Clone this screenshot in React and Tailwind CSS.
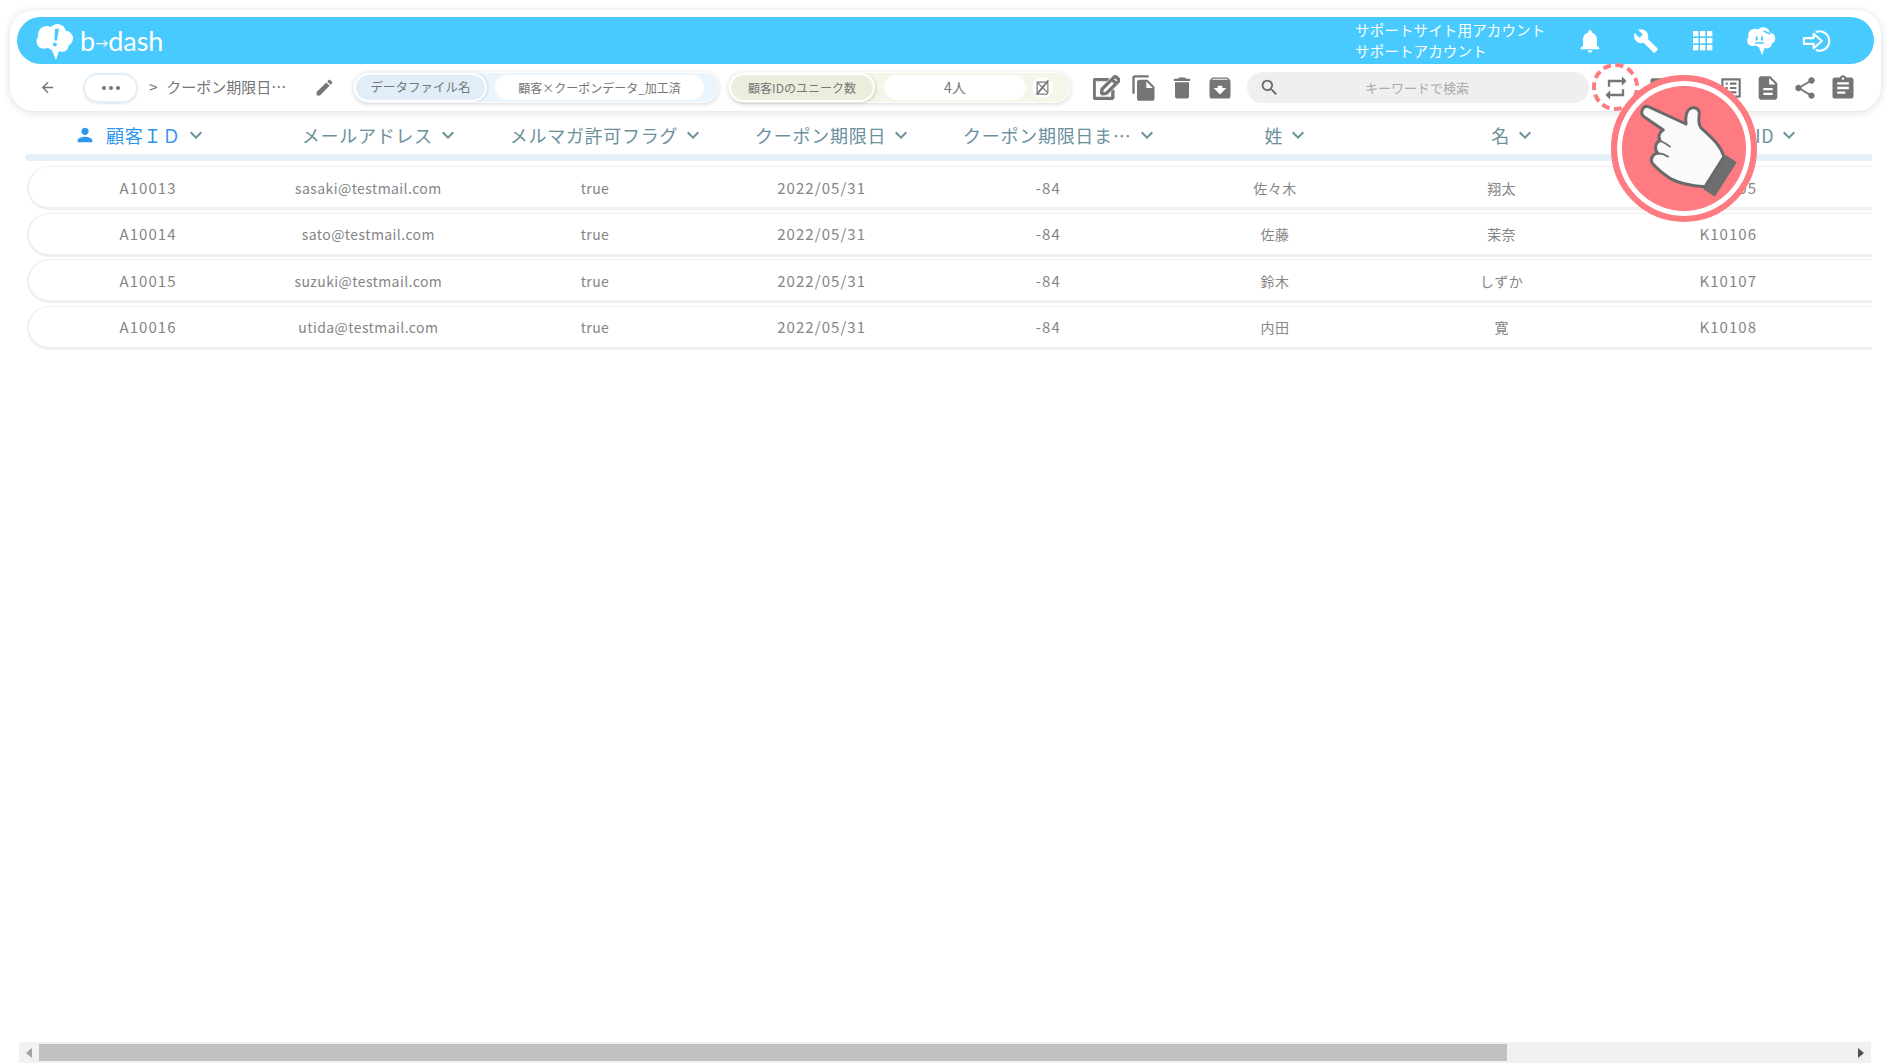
import React from "react";
import {
  MdArchive,
  MdArrowBack,
  MdAssignment,
  MdBuild,
  MdDelete,
  MdDescription,
  MdEdit,
  MdFileCopy,
  MdKeyboardArrowDown,
  MdListAlt,
  MdNotifications,
  MdPerson,
  MdRepeat,
  MdSearch,
  MdShare,
  MdBookmark,
} from "react-icons/md";
import { FaRegEdit } from "react-icons/fa";

const columns = [
  "顧客ＩＤ",
  "メールアドレス",
  "メルマガ許可フラグ",
  "クーポン期限日",
  "クーポン期限日ま…",
  "姓",
  "名",
  "クーポンID",
];

const rows = [
  ["A10013", "sasaki@testmail.com", "true", "2022/05/31", "-84", "佐々木", "翔太", "K10105"],
  ["A10014", "sato@testmail.com", "true", "2022/05/31", "-84", "佐藤", "茉奈", "K10106"],
  ["A10015", "suzuki@testmail.com", "true", "2022/05/31", "-84", "鈴木", "しずか", "K10107"],
  ["A10016", "utida@testmail.com", "true", "2022/05/31", "-84", "内田", "寛", "K10108"],
];

function Brain({ className, mascot }) {
  return (
    <svg viewBox="0 0 40 37" className={className} fill="white">
      <circle cx="12" cy="11" r="9" />
      <circle cx="23" cy="9" r="9" />
      <circle cx="31" cy="15" r="8" />
      <circle cx="9" cy="18" r="7.5" />
      <circle cx="20" cy="17" r="10" />
      <circle cx="28" cy="22" r="6.5" />
      <path d="M16 24L26 24L21.5 37Z" />
      {mascot ? (
        <g fill="#48caff">
          <rect x="13" y="12" width="2.6" height="6" rx="1.3" />
          <rect x="20" y="12" width="2.6" height="6" rx="1.3" />
          <rect x="12" y="20" width="12" height="2" rx="1" />
          <path d="M24 4l9 4-1 2-9-4z" />
        </g>
      ) : (
        <g fill="#48caff">
          <path d="M20.5 5L24.5 5L22.6 17L20 17Z" />
          <circle cx="20.4" cy="21" r="2" />
        </g>
      )}
    </svg>
  );
}

function GridIcon() {
  return (
    <svg viewBox="0 0 20 20" className="w-[20px] h-[20px]" fill="white">
      {[0, 7, 14].map((y) =>
        [0, 7, 14].map((x) => <rect key={`${x}-${y}`} x={x} y={y} width="5.4" height="5.4" />)
      )}
    </svg>
  );
}

function SignInIcon() {
  return (
    <svg viewBox="0 0 32 24" className="w-[31px] h-[24px]" fill="none" stroke="white" strokeWidth="2.2">
      <path d="M15 2.5a10 10 0 1 1 0 19" strokeLinecap="round" />
      <path d="M2 9h10V4.5L20.5 12 12 19.5V15H2z" strokeLinejoin="round" />
    </svg>
  );
}

function HeaderCell({ label, first }) {
  return (
    <div
      className={
        first
          ? "w-[221px] shrink-0 grid grid-cols-[1fr_auto_1fr] items-center -ml-[1px]"
          : "w-[226.67px] shrink-0 grid grid-cols-[1fr_auto_1fr] items-center"
      }
    >
      <div className={first ? "flex justify-end pr-[10px]" : "flex justify-end"}>
        {first && <MdPerson className="text-[#2d96f0] text-[22px]" />}
      </div>
      <span
        className={
          first
            ? "text-[18px] tracking-[0.04em] text-[#2d96f0] whitespace-nowrap"
            : "text-[18px] tracking-[0.04em] text-[#6b8f9c] whitespace-nowrap"
        }
      >
        {label}
      </span>
      <div className="flex justify-start pl-[3px]">
        <MdKeyboardArrowDown className="text-[#6b8f9c] text-[24px]" />
      </div>
    </div>
  );
}

function Row({ cells }) {
  return (
    <div className="h-[44px] w-full flex items-center pl-[12px] pt-[2px] bg-white rounded-l-[22px] border-t border-b-[3px] border-l-2 border-[#efefef]">
      {cells.map((cell, i) => {
        // the ids and dates sit wider than the mail addresses
        const numeric = /^[A-Z0-9/-]+$/.test(cell);
        return (
          <div
            key={i}
            className={
              (i === 0 ? "w-[214px] " : "w-[226.67px] ") +
              (numeric ? "text-[15px] tracking-[0.07em] " : "text-[14px] tracking-[0.03em] ") +
              "shrink-0 text-center text-[#858585]"
            }
          >
            {cell}
          </div>
        );
      })}
    </div>
  );
}

export default function App() {
  return (
    <div
      className="relative h-screen overflow-hidden bg-white flex flex-col"
      style={{ fontFamily: '"Noto Sans CJK JP", "Noto Sans", sans-serif' }}
    >
      <div className="mx-[10px] mt-[10px] h-[101px] shrink-0 w-[1871px] bg-white rounded-[24px] shadow-[0_1px_8px_rgba(0,0,0,0.14)] px-[7px] pt-[7px]">
        {/* top blue bar */}
        <div className="h-[47px] rounded-full bg-[#48caff] flex items-center text-white">
          <div className="flex items-center ml-[18px]">
            <Brain className="w-[39px] h-[36px] mt-[3px]" />
            <span
              className="ml-[6px] text-[27px] leading-none"
              style={{ fontFamily: 'Lato, "Noto Sans", sans-serif' }}
            >
              b<span className="text-[13px] align-[3px]">→</span>dash
            </span>
          </div>
          <div className="ml-auto -mt-[2px] text-[14.5px] leading-[21px] w-[222px] tracking-[0.01em]">
            <div className="whitespace-nowrap">サポートサイト用アカウント</div>
            <div className="whitespace-nowrap">サポートアカウント</div>
          </div>
          <div className="w-[30px] -ml-[2px] flex justify-center">
            <MdNotifications className="text-[28px]" />
          </div>
          <div className="w-[26px] ml-[28px] flex justify-center">
            <MdBuild className="text-[30px]" />
          </div>
          <div className="w-[20px] ml-[34px] flex justify-center">
            <GridIcon />
          </div>
          <div className="w-[30px] ml-[33px] flex justify-center">
            <Brain className="w-[30px] h-[28px]" mascot />
          </div>
          <div className="w-[31px] ml-[26px] mr-[41px] flex justify-center">
            <SignInIcon />
          </div>
        </div>

        {/* toolbar */}
        <div className="h-[47px] flex items-center text-[#757575]">
          <MdArrowBack className="ml-[22px] text-[17px] shrink-0" />
          <div className="ml-[27px] w-[55px] h-[30px] rounded-full border-2 border-[#e3eff9] shadow-[0_1px_2px_rgba(0,0,0,0.1)] flex items-center justify-center gap-[3px] shrink-0">
            <span className="w-[4px] h-[4px] rounded-full bg-[#757575]" />
            <span className="w-[4px] h-[4px] rounded-full bg-[#757575]" />
            <span className="w-[4px] h-[4px] rounded-full bg-[#757575]" />
          </div>
          <span className="ml-[11px] w-[143px] flex gap-[9px] text-[15px] whitespace-nowrap">
            <span>&gt;</span>
            <span>クーポン期限日…</span>
          </span>
          <MdEdit className="ml-[22px] text-[21px] shrink-0" />

          <div className="ml-[18px] w-[366px] h-[31px] rounded-full bg-[#eaf4fd] border border-white shadow-[0_1px_4px_rgba(0,0,0,0.16)] flex items-center shrink-0">
            <div className="w-[133px] h-[29px] rounded-full bg-[#e1eef9] border-2 border-white shadow-[1px_0_3px_rgba(0,0,0,0.12)] flex items-center justify-center text-[12.5px] whitespace-nowrap">
              データファイル名
            </div>
            <div className="ml-[8px] w-[209px] h-[25px] rounded-full bg-white flex items-center justify-center text-[12px] whitespace-nowrap">
              顧客×クーポンデータ_加工済
            </div>
          </div>

          <div className="ml-[9px] w-[343px] h-[31px] rounded-full bg-[#f5f6e9] border border-white shadow-[0_1px_4px_rgba(0,0,0,0.16)] flex items-center shrink-0">
            <div className="w-[146px] h-[29px] rounded-full bg-[#eceedd] border-2 border-white shadow-[1px_1px_3px_rgba(0,0,0,0.16)] flex items-center justify-center text-[12px] whitespace-nowrap">
              顧客IDのユニーク数
            </div>
            <div className="ml-[9px] w-[142px] h-[25px] rounded-full bg-white flex items-center justify-center text-[14px]">
              4人
            </div>
            <div className="ml-[6px] w-[21px] h-[21px] rounded-full bg-white flex items-center justify-center">
              <svg viewBox="0 0 16 16" className="w-[19px] h-[19px]" fill="none" stroke="#7a7a7a">
                <rect x="3.5" y="3.5" width="9" height="10" rx="1" strokeWidth="1" />
                <path d="M3 14L13 2" strokeWidth="1.6" />
                <path d="M3 3l9 9" strokeWidth="1" />
              </svg>
            </div>
          </div>

          <div className="ml-[21px] w-[28px] flex justify-center shrink-0">
            <FaRegEdit className="text-[27px]" stroke="currentColor" strokeWidth={22} />
          </div>
          <div className="ml-[10px] w-[28px] flex justify-center shrink-0">
            <MdFileCopy className="text-[28px]" />
          </div>
          <div className="ml-[10px] w-[28px] flex justify-center shrink-0">
            <MdDelete className="text-[28px]" />
          </div>
          <div className="ml-[10px] w-[28px] flex justify-center shrink-0">
            <MdArchive className="text-[28px]" />
          </div>

          <div className="ml-[13px] w-[342px] h-[31px] rounded-full bg-[#efefef] flex items-center shrink-0">
            <MdSearch className="ml-[12px] text-[21px] text-[#666666]" />
            <span className="ml-[85px] text-[13px] text-[#aaaaaa] whitespace-nowrap">キーワードで検索</span>
          </div>

          <div className="ml-[13px] w-[28px] flex justify-center shrink-0">
            <MdRepeat className="text-[28px]" />
          </div>
          <div className="ml-[14px] w-[28px] flex justify-center shrink-0">
            <MdBookmark className="text-[26px]" />
          </div>
          <div className="ml-[45px] w-[28px] flex justify-center shrink-0">
            <MdListAlt className="text-[26px]" />
          </div>
          <div className="ml-[9px] w-[28px] flex justify-center shrink-0">
            <MdDescription className="text-[28px]" />
          </div>
          <div className="ml-[8.5px] w-[28px] flex justify-center shrink-0">
            <MdShare className="text-[26px]" />
          </div>
          <div className="ml-[10px] w-[28px] flex justify-center shrink-0">
            <MdAssignment className="text-[28px]" />
          </div>
        </div>
      </div>

      {/* table */}
      <div className="ml-[25px] w-[1847px] flex-1 overflow-hidden">
        <div className="h-[43px] flex items-center pl-[9px] pt-[5px]">
          {columns.map((c, i) => (
            <HeaderCell key={c} label={c} first={i === 0} />
          ))}
        </div>
        <div className="h-[7px] bg-[#e3eff9] rounded-l-[4px]" />
        <div className="pl-[2px] pt-[5px] flex flex-col gap-[2.5px]">
          {rows.map((r) => (
            <Row key={r[0]} cells={r} />
          ))}
        </div>
      </div>

      {/* horizontal scrollbar */}
      <div className="ml-[19px] w-[1852px] h-[21px] shrink-0 bg-[#f1f1f1] flex items-center">
        <div className="w-[20px] flex justify-center">
          <span className="w-0 h-0 border-y-[5px] border-y-transparent border-r-[6px] border-r-[#a3a3a3]" />
        </div>
        <div className="w-[1468px] h-[17px] bg-[#c1c1c1]" />
        <div className="ml-auto w-[20px] flex justify-center">
          <span className="w-0 h-0 border-y-[5px] border-y-transparent border-l-[6px] border-l-[#505050]" />
        </div>
      </div>

      {/* click highlight */}
      <div className="absolute left-[1592px] top-[63px] w-[47px] h-[48px] rounded-full border-[4px] border-dashed border-[#ff7b82]" />
      <div className="absolute left-[1611px] top-[75px] w-[146px] h-[147px] rounded-full bg-[#ff7b82] border-[6px] border-[#ff7b82] shadow-[inset_0_0_0_5px_white]" />
      <svg
        viewBox="0 0 600 540"
        className="absolute left-[1580px] top-[50px] w-[200px] h-[180px]"
      >
        <path
          d="M437 318L466 338L404 436L373 416Z"
          fill="#6e6e6e"
          stroke="#6e6e6e"
          strokeWidth="6"
          strokeLinejoin="round"
        />
        <path
          d="M205 170L318 222C316 205 318 190 325 180C335 168 355 172 358 188C358 205 352 215 362 232C385 255 420 280 432 320L375 410C340 408 300 402 270 385C250 372 230 355 217 340C208 325 222 310 234 310C222 298 225 278 240 272C232 258 240 245 250 240L192 200C178 190 188 165 205 170Z"
          fill="#fafafa"
          stroke="#6a6a6a"
          strokeWidth="9"
          strokeLinejoin="round"
        />
        <path
          d="M240 272C250 276 260 282 270 290M234 310C245 310 255 314 265 320"
          fill="none"
          stroke="#6a6a6a"
          strokeWidth="5"
          strokeLinecap="round"
        />
      </svg>
    </div>
  );
}
